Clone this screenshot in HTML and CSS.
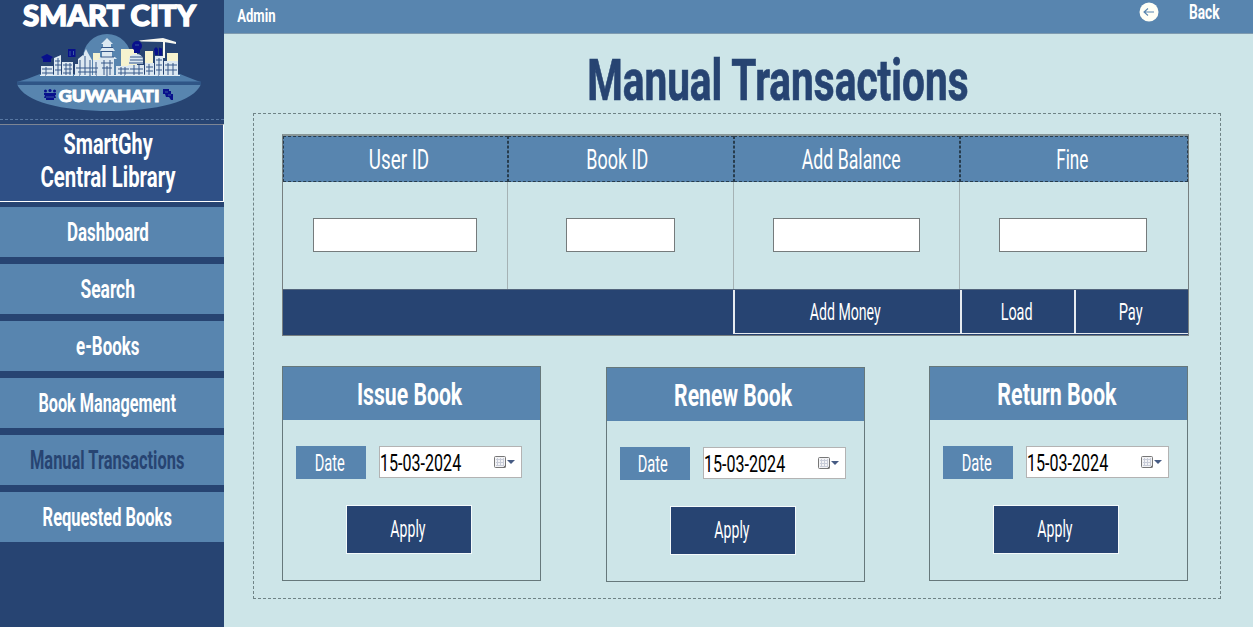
FILE: index.html
```
<!DOCTYPE html>
<html lang="en">
<head>
<meta charset="utf-8">
<title>Manual Transactions</title>
<link rel="stylesheet" href="styles.css">
</head>
<body>
<div class="app">
  <aside class="sidebar">
    <div class="logo">
      <svg width="224" height="118" viewBox="0 0 224 118">
        <text class="logo-title" x="23" y="26" textLength="173" lengthAdjust="spacingAndGlyphs">SMART CITY</text>
        <circle cx="107" cy="58" r="24" fill="#5885af"/>
        <path d="M93 53h7v22h-7zM121 49h16v26h-16zM145 51h8v22h-8zM167 53h11v20h-11z" fill="#f6f3cf"/>
        <path d="M17 82Q28 79 40 74H180Q192 79 201 82Z" fill="#4f7daa"/>
        <path d="M17 84C24 102 62 111 109 111S194 102 201 84Z" fill="#5885af"/>
        <path d="M17 81.500H201V85H17z" fill="#2f5586"/>
        <!-- skyline -->
        <g fill="#dce8f1">
          <path d="M41 66h12v10H41zM54 58l7-3v21h-7zM62 62h11v14H62zM75 64h6v12h-6zM78 59l5-4 5 5v16H78zM84 53l2-4 2 4 4 7v16h-9zM93 60h7v16h-7z"/>
          <path d="M100 76V59h-2l3-2h1v-6h-2l2-3h1v-4h-2l6-6 6 6h-2v4h2l2 3h-3v6h3l2 2h-3v17z"/>
          <path d="M116 66h14v10h-14zM129 59q1-5 7-5t7 5v5h-14zM128 65h16v11h-16zM145 63h9v13h-9zM155 56h8v20h-8zM164 61h14v15h-14z"/>
          <path d="M139 40.500L163 38l13 4v2l-12-2-23-.5zM163 40h2v18h-2z" fill="#f7f7f0"/>
        </g>
        <g stroke="#36588a" stroke-width="1" fill="none">
          <path d="M42 69h10M42 73h11M55 61h5M55 65h6M55 70h6M63 65h9M64 69h8M63 73h8M76 68h22M78 72h19M101 47.500h12M101 51.500h12M101 57h13M101 63h12M102 68h10M118 69h11M118 73h11M130 57h12M130 60h13M129 63h14M130 69h13M129 73h14M146 67h7M146 71h7M156 60h6M156 65h6M156 70h6M165 65h12M165 70h12"/>
          <path d="M46 67v9M58 58v18M66 63v13M70 63v13M80 60v16M85 56v20M90 60v16M96 62v14M104 60v16M107 66v10M110 60v16M121 67v9M125 67v9M134 65v11M139 65v11M149 64v12M159 58v18M168 63v13M173 63v13"/>
        </g>
        <path d="M40 75.500H180" stroke="#e4edf4" stroke-width="1" stroke-dasharray="5 1 9 2"/>
        <g fill="#08108c">
          <path d="M41 57l6-3 6 3-2 2v3h-8v-3zM68 49h7.500v8H68zM154 49l2-2 2 2v6h-3zM159 47.500l3 1v7h-3z"/>
          <circle cx="137" cy="46" r="5"/>
          <path d="M134 50h6v3h-6z"/>
          <circle cx="45.500" cy="91" r="1.500"/><circle cx="50" cy="90.500" r="1.600"/><circle cx="54.500" cy="91" r="1.500"/>
          <path d="M44 93h12v2h-1l1 3h-2v2h-8v-2h-2l1-3h-1z"/>
          <path d="M163 89h6v2h2v3h2v6h-2l-2-3h-3l-1-3h-2z"/>
        </g>
        <path d="M70 51v5M73.500 51v4M135 45h4M46 97h8M165 92h3M168 95h3" stroke="#4f7daa" stroke-width=".7"/>
        <text class="logo-city" x="58.500" y="102" textLength="101" lengthAdjust="spacingAndGlyphs">GUWAHATI</text>
      </svg>
    </div>
    <div class="library">
      <div><span class="t t70">SmartGhy</span></div>
      <div><span class="t t71">Central Library</span></div>
    </div>
    <nav class="nav">
      <a class="nav-item"><span class="t t66">Dashboard</span></a>
      <a class="nav-item"><span class="t t68">Search</span></a>
      <a class="nav-item"><span class="t t66">e-Books</span></a>
      <a class="nav-item"><span class="t t63">Book Management</span></a>
      <a class="nav-item active"><span class="t t64">Manual Transactions</span></a>
      <a class="nav-item"><span class="t t64">Requested Books</span></a>
    </nav>
  </aside>
  <main class="main">
    <header class="topbar">
      <span class="admin"><span class="t t73">Admin</span></span>
      <span class="back">
        <svg width="20" height="20" viewBox="0 0 20 20"><circle cx="10" cy="10" r="9.500" fill="#fffff6"/><path d="M15 10H5M9 6.500L5 10l4 3.500" fill="none" stroke="#5885af" stroke-width="1.100"/></svg>
        <span class="back-label"><span class="t t70">Back</span></span>
      </span>
    </header>
    <h1 class="title"><span class="t t72">Manual Transactions</span></h1>
    <section class="panel">
      <div class="table">
        <div class="row head">
          <div class="cell c1"><span class="t t68">User ID</span></div>
          <div class="cell c2"><span class="t t65">Book ID</span></div>
          <div class="cell c3"><span class="t t64">Add Balance</span></div>
          <div class="cell c4"><span class="t t62">Fine</span></div>
        </div>
        <div class="row body">
          <div class="cell"><input class="field f1" type="text"></div>
          <div class="cell"><input class="field f2" type="text"></div>
          <div class="cell"><input class="field f3" type="text"></div>
          <div class="cell"><input class="field f4" type="text"></div>
        </div>
        <div class="foot">
          <div></div>
          <div class="action add"><span class="t t59">Add Money</span></div>
          <div class="action"><span class="t t61">Load</span></div>
          <div class="action"><span class="t t62">Pay</span></div>
        </div>
      </div>
      <div class="cards">
        <article class="card">
          <h2><span class="t t67">Issue Book</span></h2>
          <div class="date-row">
            <span class="badge"><span class="t t62">Date</span></span>
            <div class="date"><span class="t t68">15-03-2024</span>
              <svg width="24" height="14" viewBox="0 0 24 14"><rect x="1.500" y="1.500" width="11" height="11" rx="1" fill="#f3f3f5" stroke="#777"/><path d="M3 4.500h8M3 7.500h8M3 10.500h8M4.500 3v8M7.500 3v8M10.500 3v8" stroke="#c8ccd8"/><path d="M10 12.500l2.500-2.500v2.500z" fill="#666"/><path d="M14 5h8l-4 4z" fill="#465b83"/></svg>
            </div>
          </div>
          <div class="apply"><span class="t t59">Apply</span></div>
        </article>
        <article class="card renew">
          <h2><span class="t t67">Renew Book</span></h2>
          <div class="date-row">
            <span class="badge"><span class="t t62">Date</span></span>
            <div class="date"><span class="t t68">15-03-2024</span>
              <svg width="24" height="14" viewBox="0 0 24 14"><rect x="1.500" y="1.500" width="11" height="11" rx="1" fill="#f3f3f5" stroke="#777"/><path d="M3 4.500h8M3 7.500h8M3 10.500h8M4.500 3v8M7.500 3v8M10.500 3v8" stroke="#c8ccd8"/><path d="M10 12.500l2.500-2.500v2.500z" fill="#666"/><path d="M14 5h8l-4 4z" fill="#465b83"/></svg>
            </div>
          </div>
          <div class="apply"><span class="t t59">Apply</span></div>
        </article>
        <article class="card">
          <h2><span class="t t68">Return Book</span></h2>
          <div class="date-row">
            <span class="badge"><span class="t t62">Date</span></span>
            <div class="date"><span class="t t68">15-03-2024</span>
              <svg width="24" height="14" viewBox="0 0 24 14"><rect x="1.500" y="1.500" width="11" height="11" rx="1" fill="#f3f3f5" stroke="#777"/><path d="M3 4.500h8M3 7.500h8M3 10.500h8M4.500 3v8M7.500 3v8M10.500 3v8" stroke="#c8ccd8"/><path d="M10 12.500l2.500-2.500v2.500z" fill="#666"/><path d="M14 5h8l-4 4z" fill="#465b83"/></svg>
            </div>
          </div>
          <div class="apply"><span class="t t59">Apply</span></div>
        </article>
      </div>
    </section>
  </main>
</div>
</body>
</html>
```
FILE: styles.css
```
* { box-sizing: border-box; }
body { margin: 0; font-family: Roboto, "Liberation Sans", sans-serif; overflow: hidden; }
h1, h2 { margin: 0; }

.app { display: flex; width: 1253px; height: 627px; background: #cde5e8; }

/* condensed lettering */
.t { display: inline-block; white-space: nowrap; transform: scaleX(var(--sx)); }
.t59 { --sx: .588; }
.t61 { --sx: .6; }
.t62 { --sx: .61; }
.t63 { --sx: .624; }
.t64 { --sx: .632; }
.t65 { --sx: .64; }
.t66 { --sx: .65; }
.t67 { --sx: .662; }
.t68 { --sx: .67; }
.t70 { --sx: .685; }
.t71 { --sx: .703; }
.t72 { --sx: .712; }
.t73 { --sx: .727; }

.sidebar { width: 224px; flex: none; background: #274472; color: #fff; font-weight: 700; }
.logo { height: 120px; border-bottom: 1px dashed #5878a3; }
.logo svg { display: block; overflow: visible; }
.logo-title, .logo-city { font-family: Lato, sans-serif; font-weight: 900; fill: #fff; stroke: #fff; }
.logo-title { font-size: 28px; stroke-width: 1.4px; }
.logo-city { font-size: 17.5px; stroke-width: .9px; }
.library { height: 78px; margin-top: 4px; padding-top: 3px; background: #2f5086; border: solid #fff; border-width: 1px 1px 1px 0; border-top-color: #7d8594; font-size: 29px; line-height: 33px; text-align: center; }
.library div { padding-right: 7px; }
.nav { display: grid; grid-template-columns: 100%; gap: 7px; padding-top: 5px; }
.nav-item { display: flex; align-items: center; justify-content: center; height: 50px; padding-right: 9px; background: #5885af; font-size: 26px; line-height: 50px; }
.nav-item.active { color: #274472; }

.main { flex: 1; min-width: 0; }
.topbar { display: flex; justify-content: space-between; height: 34px; background: #5885af; border-bottom: 1px solid #7f9bb0; color: #fff; font-weight: 700; }
.admin { padding-left: 6px; font-size: 18px; line-height: 32px; }
.back { display: flex; gap: 23px; padding: 2px 26px 0 0; }
.back-label { font-size: 20px; line-height: 21px; }

.title { height: 79px; color: #274472; font-size: 57px; line-height: 94px; text-align: center; -webkit-text-stroke: .7px #274472; }
.title .t { margin-left: 78px; }

.panel { width: 968px; height: 486px; margin-left: 29px; padding: 20px 30px 0 28px; border: 1px dashed #6f8386; }
.table { width: 907px; height: 202px; border: 1px solid #777f80; border-top: 2px solid #899798; }
.row { display: grid; grid-template-columns: 225px 226px 226px 228px; }
.head { height: 46px; background: #5885af; color: #fff; font-size: 28px; }
.head .cell { display: flex; align-items: center; justify-content: center; height: 46px; line-height: 46px; border: 1px dashed #273c4d; }
.c1 { padding-left: 6px; }
.c2 { padding-right: 8px; }
.c3 { padding-left: 8px; }
.c4 { padding-right: 4px; }
.head .t { padding-top: 2px; }
.body { height: 107px; }
.body .cell { padding-top: 36px; border-right: 1px solid #a5b2b4; }
.body .cell:last-child { border-right: 0; }
.field { display: block; height: 34px; padding: 0 4px; background: #fff; border: 1px solid #757b7c; }
.f1 { width: 164px; margin-left: 30px; }
.f2 { width: 109px; margin-left: 58px; }
.f3 { width: 147px; margin-left: 39px; }
.f4 { width: 148px; margin-left: 39px; }
.foot { display: grid; grid-template-columns: 450px 227px 114px 114px; height: 46px; background: #274472; border-top: 1px solid #53657d; color: #fff; font-size: 24px; }
.action { display: flex; align-items: center; justify-content: center; height: 44px; padding-right: 2px; line-height: 44px; border: solid #e6ebf0; border-width: 0 0 1px 2px; }
.action.add { padding-right: 4px; }

.cards { display: flex; justify-content: space-between; width: 906px; padding-top: 30px; }
.card { width: 259px; height: 215px; border: 1px solid #66787b; }
.card.renew { margin: 1px 0 -1px; }
.card h2 { height: 53px; padding-right: 3px; background: #5885af; color: #fff; font-size: 32px; line-height: 55px; text-align: center; }
.date-row { display: flex; gap: 13px; padding: 26px 0 0 13px; font-size: 24px; }
.badge { width: 70px; height: 33px; padding-right: 3px; background: #5885af; color: #fff; line-height: 35px; text-align: center; }
.date { display: flex; align-items: center; justify-content: space-between; width: 143px; height: 32px; padding: 0 4px 0 0; background: #fff; border: 1px solid #b3b3b3; color: #000; line-height: 30px; }
.date .t { width: 82px; padding-top: 1px; transform-origin: 0 50%; }
.apply { display: flex; align-items: center; justify-content: center; width: 126px; height: 49px; margin: 26px 0 0 63px; padding-right: 2px; background: #274472; border: 1px solid #f4fafb; color: #fff; font-size: 24px; line-height: 49px; }
```
